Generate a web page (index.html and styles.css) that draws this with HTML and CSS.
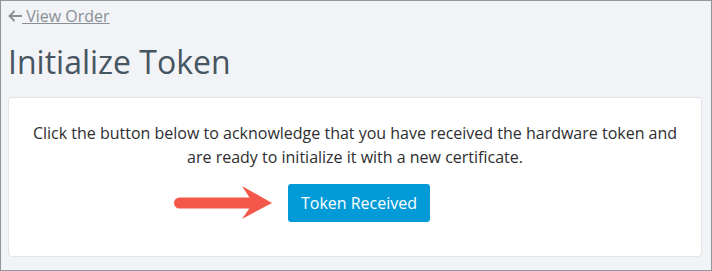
FILE: index.html
```html
<!DOCTYPE html>
<html lang="en">
<head>
  <meta charset="UTF-8">
  <meta name="viewport" content="width=device-width, initial-scale=1.0">
  <title>Initialize Token</title>
  <link rel="stylesheet" href="styles.css">
</head>
<body>
  <div class="page">
    <a href="#" class="back-link">
      <svg class="back-arrow" width="14" height="12" viewBox="0 0 14 12">
        <path d="M14 6H1.5M6.5 1L1.5 6l5 5" fill="none" stroke="#8a8f95" stroke-width="1.8"/>
      </svg>
      <span class="back-text">&nbsp;View Order</span>
    </a>
    <h1 class="title">Initialize Token</h1>
    <div class="card">
      <p class="message">Click the button below to acknowledge that you have received the hardware token and are ready to initialize it with a new certificate.</p>
      <div class="action">
        <div class="btn-wrap">
          <svg class="pointer" width="104" height="38" viewBox="0 0 104 38">
            <line x1="8.5" y1="19" x2="82" y2="19" stroke="#f4584a" stroke-width="11" stroke-linecap="round"/>
            <polygon points="71,2 101,19 71,35 82,19" fill="#f4584a"/>
          </svg>
          <button class="btn">Token Received</button>
        </div>
      </div>
    </div>
  </div>
</body>
</html>
```

FILE: styles.css
```css
* {
  margin: 0;
  padding: 0;
  box-sizing: border-box;
  font-family: "Open Sans", Arial, sans-serif;
}

body {
  background: #f1f3f7;
}

.page {
  width: 712px;
  height: 271px;
  border: 1px solid #8f979d;
  padding: 4px 9px 0 6px;
  background: #f1f3f7;
}

.back-link {
  display: inline-flex;
  align-items: center;
  color: #8a8f95;
  font-size: 16px;
  line-height: 22px;
  text-decoration: none;
}

.back-arrow {
  margin-left: 1px;
}

.back-text {
  text-decoration: underline;
}

.title {
  font-size: 32px;
  font-weight: 400;
  color: #46555f;
  line-height: 40px;
  margin-top: 15px;
  margin-bottom: 15px;
  margin-left: 1px;
}

.card {
  background: #fff;
  border: 1px solid #e1e4e8;
  border-radius: 4px;
  padding: 23px 20px 34px;
  text-align: center;
  margin-left: 1px;
}

.message {
  font-size: 16px;
  line-height: 24px;
  color: #2e2e30;
}

.action {
  display: flex;
  justify-content: center;
  margin-top: 15px;
  padding-left: 8px;
}

.btn-wrap {
  position: relative;
}

/* annotation arrow pointing at the button */
.pointer {
  position: absolute;
  right: 100%;
  top: 0;
  margin-right: 13px;
}

.btn {
  background: #029bd8;
  color: #fff;
  border: none;
  border-radius: 3px;
  font-size: 16px;
  padding: 0 13px;
  height: 38px;
  cursor: pointer;
}
```
